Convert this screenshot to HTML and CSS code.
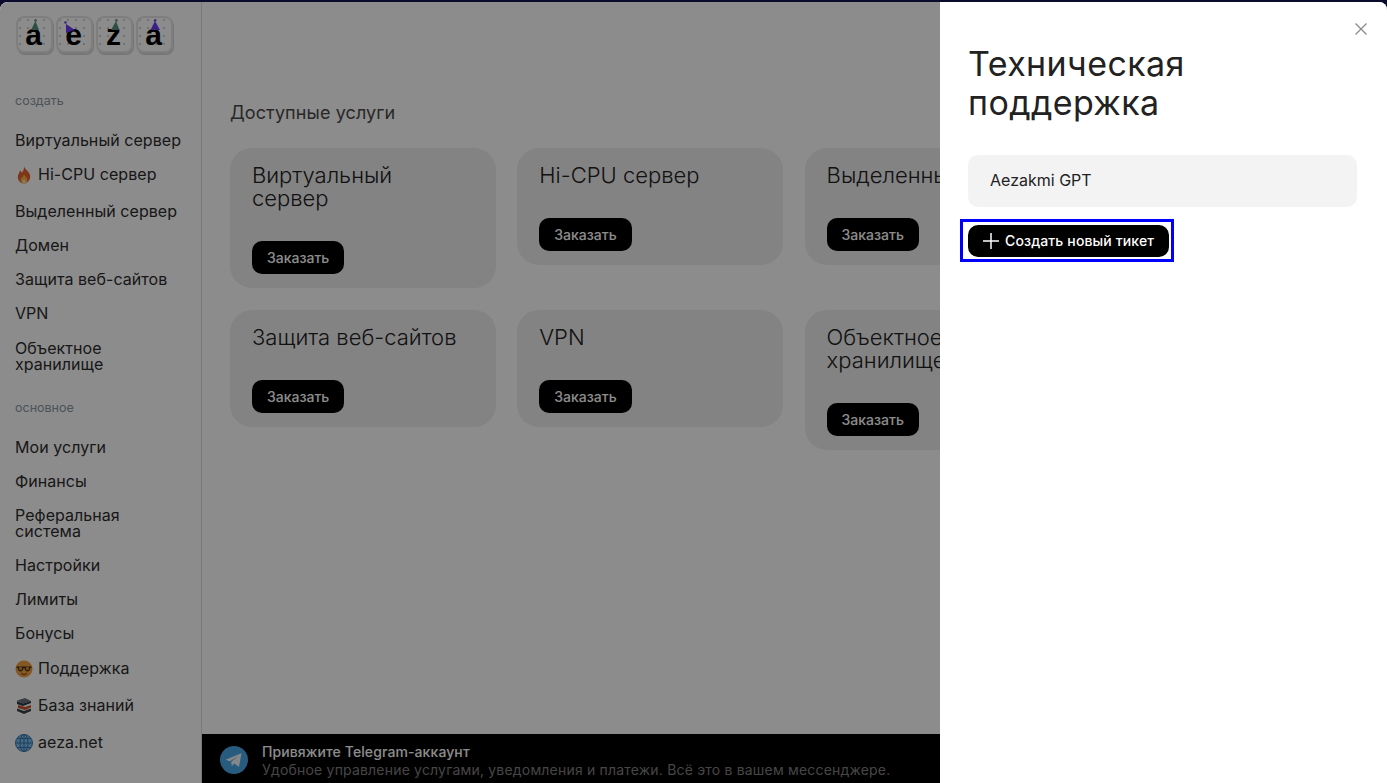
FILE: index.html
```html
<!DOCTYPE html>
<html lang="ru">
<head>
<meta charset="utf-8">
<title>aeza</title>
<link rel="stylesheet" href="styles.css">
</head>
<body>
<div class="app">
  <aside class="sidebar">
    <div class="logo">
      <div class="key"><svg class="hat" viewBox="0 0 12 12"><path d="M6.500 2 L10 11 L2 11 Z" fill="#558f80"/><circle cx="6.500" cy="1.500" r="1.200" fill="#558f80"/></svg><span>a</span></div>
      <div class="key"><svg class="hat hat-tilted" viewBox="0 0 12 12"><path d="M2 3 L11 9 L2 12 Z" fill="#6a3af0"/><circle cx="1.500" cy="1.500" r="1.200" fill="#6a3af0"/></svg><span>e</span></div>
      <div class="key"><svg class="hat" viewBox="0 0 12 12"><path d="M7 2 L10.500 11 L2 11 Z" fill="#558f80"/><circle cx="7.500" cy="1.500" r="1.200" fill="#558f80"/></svg><span>z</span></div>
      <div class="key"><svg class="hat" viewBox="0 0 12 12"><path d="M6 2 L11 11 L1.500 11 Z" fill="#6a3af0"/><circle cx="6" cy="1.500" r="1.200" fill="#6a3af0"/></svg><span>a</span></div>
    </div>
    <div class="section-label first">создать</div>
    <nav class="menu">
      <a>Виртуальный сервер</a>
      <a class="emoji"><svg class="ico" viewBox="0 0 18 18"><path d="M9 .5c1 3 5 5 6 8.500 1 4.500-2.500 8.500-6 8.500S2 14 3 9.500c.5-2 1.700-3 2-5 1 .5 1.600 1.500 1.800 2.500C8 5.500 9.300 3 9 .5z" fill="#e8622a"/><path d="M9 8c.5 2 3.500 3.500 3.500 6 0 2-1.500 3.500-3.500 3.500S5.500 16 5.500 14C5.500 12 8.500 10.500 9 8z" fill="#f7b04a"/><path d="M9 13c.6 1 1.500 1.500 1.500 2.700 0 1-.7 1.800-1.500 1.800s-1.500-.8-1.500-1.800C7.500 14.500 8.400 14 9 13z" fill="#fbe3b0"/></svg>Hi-CPU сервер</a>
      <a>Выделенный сервер</a>
      <a>Домен</a>
      <a>Защита веб-сайтов</a>
      <a>VPN</a>
      <a>Объектное хранилище</a>
    </nav>
    <div class="section-label">основное</div>
    <nav class="menu">
      <a>Мои услуги</a>
      <a>Финансы</a>
      <a>Реферальная система</a>
      <a>Настройки</a>
      <a>Лимиты</a>
      <a>Бонусы</a>
      <a class="emoji"><svg class="ico" viewBox="0 0 18 18"><circle cx="9" cy="9" r="8.500" fill="#f0a040"/><path d="M1.500 6.500h15v1.200l-1 .3c-.3 2.300-1.500 3.500-3 3.500-1.600 0-2.700-1.300-3-3.200H8.500c-.3 1.900-1.400 3.200-3 3.200-1.500 0-2.700-1.200-3-3.500l-1-.3z" fill="#4a3018"/><circle cx="5.500" cy="8.500" r="1.700" fill="#c98a3c"/><circle cx="12.500" cy="8.500" r="1.700" fill="#c98a3c"/><path d="M6 13.500c2 1.300 4 1.300 6 0" stroke="#8a4d12" stroke-width="1.200" fill="none"/></svg>Поддержка</a>
      <a class="emoji"><svg class="ico" viewBox="0 0 18 18"><path d="M2 3.500 10 1l6 3-8 2.500z" fill="#6a7480"/><path d="M2 4v3l6 2 8-3V4L8 6.500z" fill="#2f3b47"/><path d="M3 8l7 2 6-2v2.500L10 13l-7-2z" fill="#c8502e"/><path d="M2 11.500l7 2.500 7-2.500V14l-7 3-7-3z" fill="#39424c"/></svg>База знаний</a>
      <a class="emoji"><svg class="ico" viewBox="0 0 18 18"><circle cx="9" cy="9" r="8.500" fill="#7ebcec"/><g fill="none" stroke="#2f6fa8" stroke-width=".9"><circle cx="9" cy="9" r="8.500"/><ellipse cx="9" cy="9" rx="4" ry="8.500"/><path d="M9 .5v17M.5 9h17M2 4.500h14M2 13.500h14"/></g></svg>aeza.net</a>
    </nav>
  </aside>
  <main class="main">
    <div class="content">
      <h2 class="heading">Доступные услуги</h2>
      <div class="cards">
        <div class="card"><h3>Виртуальный<br>сервер</h3><button class="btn">Заказать</button></div>
        <div class="card"><h3>Hi-CPU сервер</h3><button class="btn">Заказать</button></div>
        <div class="card"><h3>Выделенный сервер</h3><button class="btn">Заказать</button></div>
        <div class="card"><h3>Защита веб-сайтов</h3><button class="btn">Заказать</button></div>
        <div class="card"><h3>VPN</h3><button class="btn">Заказать</button></div>
        <div class="card"><h3>Объектное<br>хранилище</h3><button class="btn">Заказать</button></div>
      </div>
    </div>
    <div class="tg-bar">
      <svg class="tg-ico" viewBox="0 0 28 28"><circle cx="14" cy="14" r="14" fill="#4aa8e8"/><path d="M5.500 13.800 21.500 7.200 19 21 14.300 17.500 11.800 20 11.200 15.800 18.500 10 9.800 15.200z" fill="#f2f6fa"/></svg>
      <div class="tg-text">
        <div class="tg-title">Привяжите Telegram-аккаунт</div>
        <div class="tg-sub">Удобное управление услугами, уведомления и платежи. Всё это в вашем мессенджере.</div>
      </div>
    </div>
  </main>
  <div class="overlay"></div>
  <section class="drawer">
    <svg class="close" viewBox="0 0 14 14"><path d="M1.500 1.500l11 11M12.500 1.500l-11 11" stroke="#8a8a8a" stroke-width="1.300" fill="none"/></svg>
    <h1 class="title">Техническая поддержка</h1>
    <div class="ticket">Aezakmi GPT</div>
    <div class="focus-ring">
      <button class="btn new"><svg class="plus" viewBox="0 0 16 16"><path d="M8 0v16M0 8h16" stroke="#fff" stroke-width="1.500"/></svg>Создать новый тикет</button>
    </div>
  </section>
</div>
</body>
</html>
```
FILE: styles.css
```css
* { box-sizing: border-box; }
html, body { margin: 0; height: 100%; }
body {
  background: #0b0b2e;
  font-family: Inter, "Noto Sans", sans-serif;
  color: #2a2a2a;
  overflow: hidden;
  padding-top: 2px;
}
.app {
  position: relative;
  display: flex;
  height: 781px;
  background: #fff;
  border-radius: 8px 8px 0 0;
  overflow: hidden;
}
.sidebar {
  flex: 0 0 202px;
  border-right: 1px solid #dcdcdc;
  padding: 14px 16px 0 15px;
  background: #fff;
}
.logo { display: flex; gap: 3px; height: 41px; margin-left: 1px; }
.key {
  position: relative;
  width: 37px;
  height: 37px;
  border-radius: 8px;
  background-color: #fff;
  background-image: radial-gradient(circle, #cfcfcf .7px, transparent 1px);
  background-size: 8px 8px;
  box-shadow: inset 0 0 0 2px #e6e6e6, 1px 2px 0 #d8d8d8;
  display: flex;
  align-items: flex-end;
  justify-content: center;
  padding-right: 2px;
  font: bold 30px/36px "Liberation Sans", sans-serif;
  color: #000;
}
.hat { position: absolute; top: 3px; left: 13px; width: 12px; height: 12px; }
.hat-tilted { left: 8px; top: 5px; }
.section-label { font-size: 12.500px; line-height: 15px; color: #8c98a0; margin: 28.400px 0 24px; }
.section-label.first { margin-top: 36px; }
.menu { display: flex; flex-direction: column; gap: 18.100px; }
.menu a { font-size: 16px; line-height: 16px; letter-spacing: .05px; color: #2d2d2d; display: block; }
.menu a.emoji { display: flex; align-items: flex-start; gap: 5px; height: 19px; }
.ico { width: 18px; height: 18px; flex: none; }
.main { flex: 1; position: relative; background: #fff; min-width: 0; }
.content { padding: 100px 0 0 28px; }
.heading { margin: 0 0 24px; font-size: 18px; line-height: 22px; font-weight: 400; letter-spacing: .1px; color: #4a4a4a; }
.cards { display: grid; grid-template-columns: repeat(3, 266px); gap: 22px 21.300px; align-items: start; }
.card { background: #eeeeee; border-radius: 22px; padding: 16px 22px 14px; }
.card h3 { margin: 0 0 31px; font-size: 22px; line-height: 23px; font-weight: 300; color: #222; white-space: nowrap; }
.btn {
  display: inline-flex;
  align-items: center;
  border: 0;
  height: 33px;
  padding: 0 15px;
  border-radius: 10px;
  background: #000;
  color: #fff;
  font: 500 14px/20px Inter, sans-serif;
}
.tg-bar {
  position: absolute;
  left: 0; right: 0; bottom: 0;
  height: 49px;
  background: #000;
  display: flex;
  align-items: center;
  padding: 2px 0 0 18px;
  gap: 14px;
}
.tg-ico { width: 28px; height: 28px; flex: none; }
.tg-text { padding-top: 3px; }
.tg-title { font-size: 14px; line-height: 18px; font-weight: 500; letter-spacing: .1px; color: #fff; }
.tg-sub { font-size: 14px; line-height: 18px; letter-spacing: .19px; color: #808080; white-space: nowrap; }
.overlay { position: absolute; inset: 0; background: rgba(0,0,0,.45); }
.drawer {
  position: absolute;
  top: 0; right: 0; bottom: 0;
  width: 447px;
  background: #fff;
  padding: 42px 30px 0 28px;
}
.close { position: absolute; top: 20px; right: 19px; width: 14px; height: 14px; }
.title { margin: 0 0 33px; font-size: 34px; line-height: 39px; font-weight: 400; letter-spacing: .4px; color: #222; width: 300px; }
.ticket { background: #f3f3f3; border-radius: 10px; height: 52px; padding: 0 22px; line-height: 50px; font-size: 16px; color: #222; }
.focus-ring { display: inline-block; margin: 12px 0 0 -8px; border: 3px solid #00f; padding: 3px 2px 2px 5px; line-height: 0; }
.btn.new { height: 32px; padding: 0 15px; gap: 6px; font-size: 14px; letter-spacing: .13px; }
.plus { width: 16px; height: 16px; }
```
